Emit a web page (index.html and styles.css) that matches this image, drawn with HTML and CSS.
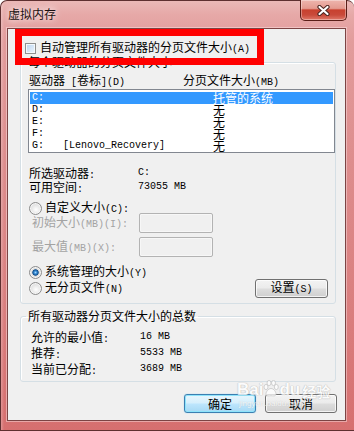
FILE: index.html
```html
<!DOCTYPE html>
<html lang="zh-CN">
<head>
<meta charset="utf-8">
<title>虚拟内存</title>
<link rel="stylesheet" href="styles.css">
</head>
<body>
<div class="window">
  <div class="titlebar">
    <span class="title">虚拟内存</span>
    <button class="close" aria-label="关闭"><svg width="13" height="11" viewBox="0 0 13 11"><path d="M2.5 2L10.5 9M10.5 2L2.5 9" stroke="#4a2420" stroke-width="4.2" stroke-linecap="round"/><path d="M2.5 2L10.5 9M10.5 2L2.5 9" stroke="#ffffff" stroke-width="2.2" stroke-linecap="round"/></svg></button>
  </div>
  <div class="client">
    <div class="auto-row">
      <span class="checkbox"></span>
      <span>自动管理所有驱动器的分页文件大小<span class="m">(A)</span></span>
      <div class="highlight"></div>
    </div>

    <fieldset class="group g1">
      <legend>每个驱动器的分页文件大小</legend>
      <div class="list-head"><span class="hc1">驱动器<span class="m"> [</span>卷标<span class="m">](D)</span></span><span>分页文件大小<span class="m">(MB)</span></span></div>
      <div class="list">
        <div class="row sel"><span class="c1 m">C:</span><span class="c2"></span><span class="c3">托管的系统</span></div>
        <div class="row"><span class="c1 m">D:</span><span class="c2"></span><span class="c3">无</span></div>
        <div class="row"><span class="c1 m">E:</span><span class="c2"></span><span class="c3">无</span></div>
        <div class="row"><span class="c1 m">F:</span><span class="c2"></span><span class="c3">无</span></div>
        <div class="row"><span class="c1 m">G:</span><span class="c2 m">[Lenovo_Recovery]</span><span class="c3">无</span></div>
      </div>
      <div class="info first"><span class="lbl">所选驱动器<span class="m">:</span></span><span class="m">C:</span></div>
      <div class="info"><span class="lbl">可用空间<span class="m">:</span></span><span class="m">73055 MB</span></div>

      <div class="radio-row custom"><span class="radio"></span><span>自定义大小<span class="m">(C):</span></span></div>
      <div class="field"><span class="flbl">初始大小<span class="m">(MB)(I):</span></span><input class="input" type="text" disabled></div>
      <div class="field second"><span class="flbl">最大值<span class="m">(MB)(X):</span></span><input class="input" type="text" disabled></div>
      <div class="radio-row sys"><span class="radio on"></span><span>系统管理的大小<span class="m">(Y)</span></span></div>
      <div class="radio-row none"><span class="radio"></span><span>无分页文件<span class="m">(N)</span></span><button class="btn set">设置<span class="m">(S)</span></button></div>
    </fieldset>

    <fieldset class="group g2">
      <legend>所有驱动器分页文件大小的总数</legend>
      <div class="total"><span class="lbl">允许的最小值<span class="m">:</span></span><span class="m">16 MB</span></div>
      <div class="total"><span class="lbl">推荐<span class="m">:</span></span><span class="m">5533 MB</span></div>
      <div class="total"><span class="lbl">当前已分配<span class="m">:</span></span><span class="m">3689 MB</span></div>
    </fieldset>

    <div class="actions">
      <button class="btn default">确定</button>
      <button class="btn">取消</button>
    </div>
  </div>
  <div class="watermark">
    <span class="wm-bai">Bai</span><svg class="paw" width="16" height="17" viewBox="0 0 16 17"><g fill="#ffffff" stroke="#b9b9b9" stroke-width="0.8"><ellipse cx="3" cy="7" rx="2" ry="2.6"/><ellipse cx="6" cy="3" rx="2" ry="2.6"/><ellipse cx="10.5" cy="3" rx="2" ry="2.6"/><ellipse cx="13.3" cy="7" rx="2" ry="2.6"/><path d="M8 8.5c-3 0-5.5 4-5 6.2 0.5 1.8 3 1 5 1s4.5 0.8 5-1c0.5-2.2-2-6.2-5-6.2z"/></g></svg><span class="wm-bai">du</span><span class="wm-jy">经验</span>
    <div class="wm-url">jingyan.baidu.com</div>
  </div>
</div>
</body>
</html>
```

FILE: styles.css
```css
* { box-sizing: border-box; }
html, body { margin: 0; padding: 0; }
body {
  width: 354px;
  height: 431px;
  overflow: hidden;
  background: #ffffff;
  color: #000000;
  font: 12px/12px "Noto Sans CJK SC", "Noto Sans", sans-serif;
}
.m {
  font-family: "Liberation Mono", "DejaVu Sans Mono", monospace;
  font-size: 10px;
}

.window {
  position: relative;
  width: 354px;
  height: 431px;
  display: flex;
  flex-direction: column;
  border: 1px solid #5e3030;
  border-right: 0;
  border-radius: 7px 7px 0 0;
  padding: 0 8px 9px 6px;
  background:
    linear-gradient(90deg, rgba(255,255,255,0.25) 0, rgba(255,255,255,0) 3px),
    linear-gradient(180deg, #ebb9b7 0, #e6a8a7 14px, #e29c9c 40px, #dd8d8d 160px, #d97d7d 320px, #d66f6f 431px);
}

.titlebar {
  height: 27px;
  display: flex;
  align-items: flex-start;
}
.title {
  margin: 7px 0 0 1px;
  line-height: 12px;
  color: #1a1010;
  text-shadow: 0 0 6px rgba(255,255,255,0.9), 0 0 10px rgba(255,255,255,0.6);
}
.close {
  margin: -1px -1px 0 auto;
  width: 47px;
  height: 21px;
  padding: 0;
  border: 1px solid #5a1e18;
  border-top: 0;
  border-radius: 0 0 5px 5px;
  background: linear-gradient(180deg, #eeb5ad 0%, #e49a90 42%, #c8412f 50%, #c94a3a 75%, #e0796a 100%);
  box-shadow: inset 0 0 0 1px rgba(255,255,255,0.35);
  display: flex;
  align-items: center;
  justify-content: center;
}
.close svg { display: block; }

.client {
  flex: 1;
  background: #f0f0f0;
  border: 1px solid #7c4444;
  box-shadow: 0 0 0 1px rgba(255,235,235,0.45);
  padding: 13px 9px 0 12px;
  display: flex;
  flex-direction: column;
}

.auto-row {
  position: relative;
  margin-left: 5px;
  height: 12px;
  display: flex;
  align-items: center;
  gap: 4px;
  white-space: nowrap;
}
.checkbox {
  width: 11px;
  height: 11px;
  flex: none;
  border: 1px solid #8e8f8f;
  background: linear-gradient(135deg, #b9d3ee 0%, #d6e6f7 55%, #eef5fd 100%);
  box-shadow: inset 0 0 0 1px #f4f8fc;
}
.highlight {
  position: absolute;
  left: -10px;
  top: -13px;
  width: 249px;
  height: 36px;
  border: 7px solid #ff0000;
  z-index: 2;
}

.group {
  margin: 0;
  min-width: 0;
  border: 1px solid #d5dfe5;
  border-radius: 3px;
  box-shadow: inset 1px 1px 0 #ffffff;
}
.group legend {
  padding: 0 2px;
  line-height: 12px;
  white-space: nowrap;
}
.g1 {
  margin-top: 2px;
  padding: 6px 7px 5px 8px;
}
.g1 legend { margin-left: -3px; }

.list-head {
  display: flex;
  height: 12px;
  white-space: nowrap;
}
.hc1 { width: 154px; }

.list {
  margin: 3px -7px 0 -1px;
  height: 64px;
  border: 1px solid #828790;
  background: #ffffff;
  padding: 2px 1px 0 1px;
}
.row {
  display: flex;
  height: 12px;
  line-height: 12px;
  padding-left: 2px;
  white-space: nowrap;
}
.row.sel { background: #3399ff; color: #ffffff; }
.c1 { width: 31px; }
.c2 { width: 150px; }

.info {
  display: flex;
  height: 14px;
  line-height: 14px;
  white-space: nowrap;
}
.info.first { margin-top: 13px; }
.info .lbl { width: 109px; }

.radio-row {
  display: flex;
  align-items: center;
  gap: 3px;
  height: 12px;
  white-space: nowrap;
}
.radio-row.custom { margin-top: 8px; }
.radio-row.sys { margin-top: 9px; }
.radio-row.none { margin-top: 1px; height: 19px; }
.radio {
  width: 13px;
  height: 13px;
  flex: none;
  border-radius: 50%;
  border: 1px solid #8c8c8c;
  background: radial-gradient(circle at 55% 60%, #ffffff 0, #f0f0f0 30%, #cfcfcf 100%);
  box-shadow: inset 0 0 0 1px #f6f6f6;
}
.radio.on {
  background: radial-gradient(circle at 50% 50%, #9fd6ff 0, #3a8dd4 18%, #0f4d8c 36%, #d9d9d9 46%, #f7f7f7 100%);
}

.field {
  margin-top: -1px;
  display: flex;
  align-items: center;
  height: 20px;
  white-space: nowrap;
}
.field.second { margin-top: 4px; }
.flbl {
  width: 110px;
  padding-left: 3px;
  color: #a3a3a3;
}
.input {
  width: 74px;
  height: 20px;
  margin: 0;
  padding: 0;
  border: 1px solid #b3b3b3;
  border-radius: 2px;
  background: #f0f0f0;
  box-shadow: inset 0 0 0 1px #f7f7f7;
}

.btn {
  width: 72px;
  height: 19px;
  padding: 0;
  border: 1px solid #707070;
  border-radius: 3px;
  background: linear-gradient(180deg, #f3f3f3 0%, #ebebeb 48%, #dddddd 52%, #cfcfcf 100%);
  box-shadow: inset 0 0 0 1px rgba(255,255,255,0.75);
  color: #000000;
  font: 12px/12px "Noto Sans CJK SC", "Noto Sans", sans-serif;
  white-space: nowrap;
}
.btn.set {
  margin-left: auto;
  width: 73px;
}
.btn.default {
  border-color: #3c7fb1;
  background: linear-gradient(180deg, #e8f6fd 0%, #d5effc 48%, #bde6fd 52%, #a6d9f4 100%);
  box-shadow: inset 0 0 0 1px #8ee4fb, 0 0 1px #5ac0ef;
}

.g2 {
  margin-top: 6px;
  padding: 7px 7px 4px 10px;
}
.g2 legend { margin-left: -5px; }
.total {
  display: flex;
  height: 16px;
  line-height: 16px;
  white-space: nowrap;
}
.total .lbl { width: 109px; }

.actions {
  margin: 12px -1px 0 0;
  display: flex;
  justify-content: flex-end;
  gap: 9px;
}

.watermark {
  position: absolute;
  left: 236px;
  top: 379px;
  display: flex;
  align-items: flex-end;
  flex-wrap: wrap;
  width: 100px;
  opacity: 0.75;
  pointer-events: none;
}
.wm-bai {
  font: bold 17px/18px "Liberation Sans", sans-serif;
  color: #ffffff;
  text-shadow: 0 0 1px #a8a8a8, 0 0 1px #a8a8a8;
}
.paw { margin: 0 0 2px 0; }
.wm-jy {
  margin-left: 2px;
  font: bold 14px/16px "Noto Sans CJK SC", sans-serif;
  color: #ffffff;
  text-shadow: 0 0 1px #a8a8a8, 0 0 1px #a8a8a8;
}
.wm-url {
  width: 100%;
  padding-left: 2px;
  font: 8px/9px "Liberation Sans", sans-serif;
  color: #ffffff;
  text-shadow: 0 0 1px #b0b0b0;
}
```
